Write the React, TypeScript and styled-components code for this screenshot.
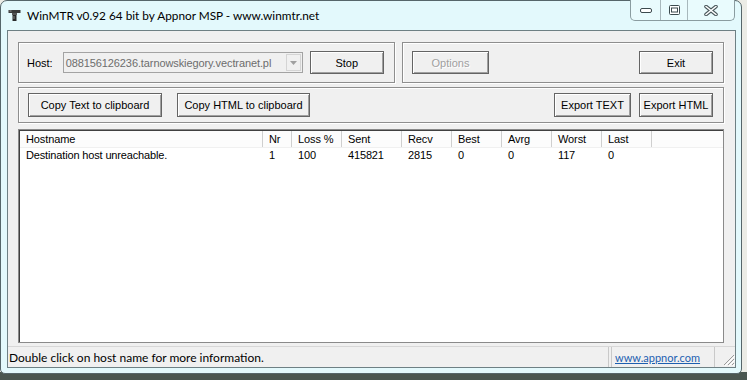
import styled, { createGlobalStyle } from "styled-components";

const GlobalStyle = createGlobalStyle`
  html, body {
    margin: 0;
    padding: 0;
  }
  body {
    width: 747px;
    height: 380px;
    overflow: hidden;
    background: linear-gradient(to bottom, #ecece6 0, #ecece6 372px, #4a5650 372px);
  }
`;

const uiFont = `"Liberation Sans", Arial, sans-serif`;
const aeroFont = `"Lato", "Open Sans", sans-serif`;

const Window = styled.div`
  box-sizing: border-box;
  width: 742px;
  height: 374px;
  border: 1px solid #56666a;
  border-radius: 7px 7px 5px 5px;
  background: #e3f9fc;
  padding: 0 5px 5px 6px;
  display: flex;
  flex-direction: column;
`;

const TitleBar = styled.div`
  height: 29px;
  display: flex;
  align-items: flex-start;
  position: relative;
`;

const TitleText = styled.div`
  margin-top: 7px;
  margin-left: 1px;
  font-family: ${aeroFont};
  font-size: 11.8px;
  color: #000;
  display: flex;
  align-items: center;
  gap: 6px;
  white-space: nowrap;
`;

const CaptionGroup = styled.div`
  position: absolute;
  top: -1px;
  right: 1px;
  height: 20px;
  display: flex;
  border: 1px solid #8a9ca0;
  border-top: none;
  border-radius: 0 0 5px 5px;
  overflow: hidden;
  background: #e9fbfd;
`;

const CaptionButton = styled.div<{ $w: number; $last?: boolean }>`
  width: ${(p) => p.$w}px;
  height: 20px;
  display: flex;
  align-items: center;
  justify-content: center;
  border-right: ${(p) => (p.$last ? "none" : "1px solid #a8b8bc")};
`;

const Client = styled.div`
  flex: 1;
  display: flex;
  flex-direction: column;
  border: 1px solid #6e8084;
  background: #f0f0f0;
  font-family: ${uiFont};
  font-size: 11px;
  color: #000;
`;

const Body = styled.div`
  padding: 11px 11px 0 10px;
  display: flex;
  flex-direction: column;
`;

const Row = styled.div<{ $top: number }>`
  display: flex;
  gap: 7px;
  margin-top: ${(p) => p.$top}px;
`;

const Group = styled.div<{ $w?: number; $h: number }>`
  box-sizing: border-box;
  ${(p) => (p.$w ? `width: ${p.$w}px;` : "flex: 1;")}
  height: ${(p) => p.$h}px;
  border: 1px solid #8e8e8e;
  box-shadow: inset 1px 1px 0 #fff, 1px 1px 0 #fff;
  display: flex;
  align-items: center;
  padding: 0 10px 0 8px;
`;

const Label = styled.span`
  margin-right: 10px;
`;

const Combo = styled.div`
  box-sizing: border-box;
  width: 245px;
  height: 21px;
  border: 1px solid #a3a3a3;
  background: #f0f0f0;
  display: flex;
  align-items: center;
  padding: 1px;
  margin-right: 7px;
`;

const ComboText = styled.div`
  flex: 1;
  color: #6d6d6d;
  padding-left: 1px;
  letter-spacing: -0.1px;
  white-space: nowrap;
  overflow: hidden;
`;

const ComboArrow = styled.div`
  width: 15px;
  height: 17px;
  box-sizing: border-box;
  border: 1px solid #d4d4d4;
  background: #f0f0f0;
  display: flex;
  align-items: center;
  justify-content: center;
`;

const Button = styled.div<{ $w: number; $h?: number; $disabled?: boolean; $ml?: number }>`
  box-sizing: border-box;
  width: ${(p) => p.$w}px;
  height: ${(p) => p.$h ?? 23}px;
  margin-left: ${(p) => p.$ml ?? 0}px;
  border: 1px solid #646464;
  box-shadow: inset 1px 1px 0 #fff, inset -1px -1px 0 #a0a0a0;
  background: #f0f0f0;
  display: flex;
  align-items: center;
  justify-content: center;
  color: ${(p) => (p.$disabled ? "#a0a0a0" : "#000")};
  text-shadow: ${(p) => (p.$disabled ? "1px 1px 0 #fff" : "none")};
  white-space: nowrap;
`;

const Spacer = styled.div`
  flex: 1;
`;

const List = styled.div`
  box-sizing: border-box;
  height: 214px;
  margin-top: 6px;
  border: 1px solid #8a8a8a;
  box-shadow: inset 1px 1px 0 #404040;
  background: #fff;
  padding: 1px 0 0 1px;
`;

const HeaderRow = styled.div`
  display: flex;
  height: 16px;
  background: #fcfcfc;
  border-bottom: 1px solid #f0f0f0;
`;

const HeaderCell = styled.div<{ $w: number }>`
  box-sizing: border-box;
  width: ${(p) => p.$w}px;
  padding-left: 6px;
  border-right: 1px solid #cfcfcf;
  line-height: 16px;
  white-space: nowrap;
  letter-spacing: -0.1px;
`;

const DataRow = styled.div`
  display: flex;
  height: 14px;
`;

const DataCell = styled.div<{ $w: number }>`
  box-sizing: border-box;
  width: ${(p) => p.$w}px;
  padding-left: 6px;
  line-height: 14px;
  white-space: nowrap;
  letter-spacing: -0.15px;
`;

const StatusBar = styled.div`
  margin-top: auto;
  height: 20px;
  border-top: 1px solid #d7d7d7;
  display: flex;
  align-items: stretch;
  font-family: ${aeroFont};
  font-size: 12px;
`;

const StatusMain = styled.div`
  flex: 1;
  padding-left: 1px;
  display: flex;
  align-items: center;
  border-right: 1px solid #c9c9c9;
`;

const StatusLink = styled.a`
  width: 104px;
  margin-left: 2px;
  box-sizing: border-box;
  border-left: 1px solid #c9c9c9;
  border-right: 1px solid #c9c9c9;
  padding-left: 3px;
  display: flex;
  align-items: center;
  font-size: 11px;
  color: #1c5fb0;
  text-decoration: underline;
`;

const Grip = styled.div`
  width: 20px;
  display: flex;
  align-items: flex-end;
  justify-content: flex-end;
  padding-bottom: 1px;
`;

const columns = [
  { name: "Hostname", w: 243, v: "Destination host unreachable." },
  { name: "Nr", w: 29, v: "1" },
  { name: "Loss %", w: 50, v: "100" },
  { name: "Sent", w: 60, v: "415821" },
  { name: "Recv", w: 50, v: "2815" },
  { name: "Best", w: 50, v: "0" },
  { name: "Avrg", w: 50, v: "0" },
  { name: "Worst", w: 50, v: "117" },
  { name: "Last", w: 50, v: "0" },
];

const AppIcon = () => (
  <svg width="13" height="13" viewBox="0 0 13 13">
    <rect x="0.5" y="1" width="12" height="3" fill="#3a3a3a" />
    <rect x="1.5" y="1.5" width="2" height="1" fill="#9a9a9a" />
    <rect x="4" y="4" width="5" height="2" fill="#555" />
    <rect x="4.5" y="6" width="4" height="6" fill="#2a2a2a" />
    <rect x="5.5" y="7" width="1" height="3" fill="#888" />
  </svg>
);

const App = () => {
  return (
    <>
      <GlobalStyle />
      <Window>
        <TitleBar>
          <TitleText>
            <AppIcon />
            WinMTR v0.92 64 bit by Appnor MSP - www.winmtr.net
          </TitleText>
          <CaptionGroup>
            <CaptionButton $w={29}>
              <svg width="12" height="6" viewBox="0 0 12 6">
                <rect x="0.5" y="1.5" width="11" height="4" rx="1.5" fill="#fff" stroke="#3c4a4e" />
              </svg>
            </CaptionButton>
            <CaptionButton $w={26}>
              <svg width="11" height="10" viewBox="0 0 11 10">
                <rect x="0.5" y="0.5" width="10" height="9" rx="1" fill="#fff" stroke="#3c4a4e" />
                <rect x="2.5" y="3" width="6" height="4" fill="#fff" stroke="#3c4a4e" />
              </svg>
            </CaptionButton>
            <CaptionButton $w={46} $last>
              <svg width="14" height="11" viewBox="0 0 14 11">
                <path d="M2 1.5 L12 9.5 M12 1.5 L2 9.5" stroke="#4a585c" strokeWidth="3.6" strokeLinecap="round" />
                <path d="M2 1.5 L12 9.5 M12 1.5 L2 9.5" stroke="#fff" strokeWidth="1.6" strokeLinecap="round" />
              </svg>
            </CaptionButton>
          </CaptionGroup>
        </TitleBar>
        <Client>
          <Body>
            <Row $top={0}>
              <Group $w={377} $h={41}>
                <Label>Host:</Label>
                <Combo>
                  <ComboText>088156126236.tarnowskiegory.vectranet.pl</ComboText>
                  <ComboArrow>
                    <svg width="7" height="4" viewBox="0 0 7 4">
                      <path d="M0 0 H7 L3.5 4 Z" fill="#a0a0a0" />
                    </svg>
                  </ComboArrow>
                </Combo>
                <Button $w={76}>Stop</Button>
              </Group>
              <Group $h={41}>
                <Button $w={77} $ml={1} $disabled>
                  Options
                </Button>
                <Spacer />
                <Button $w={74}>Exit</Button>
              </Group>
            </Row>
            <Row $top={4}>
              <Group $h={36}>
                <Button $w={134} $h={24} $ml={1}>
                  Copy Text to clipboard
                </Button>
                <Button $w={133} $h={24} $ml={15}>
                  Copy HTML to clipboard
                </Button>
                <Spacer />
                <Button $w={77} $h={24}>
                  Export TEXT
                </Button>
                <Button $w={74} $h={24} $ml={8}>
                  Export HTML
                </Button>
              </Group>
            </Row>
            <List>
              <HeaderRow>
                {columns.map((c) => (
                  <HeaderCell key={c.name} $w={c.w}>
                    {c.name}
                  </HeaderCell>
                ))}
              </HeaderRow>
              <DataRow>
                {columns.map((c) => (
                  <DataCell key={c.name} $w={c.w}>
                    {c.v}
                  </DataCell>
                ))}
              </DataRow>
            </List>
          </Body>
          <StatusBar>
            <StatusMain>Double click on host name for more information.</StatusMain>
            <StatusLink href="#">www.appnor.com</StatusLink>
            <Grip>
              <svg width="14" height="14" viewBox="0 0 14 14">
                <path d="M13 3 L3 13 M13 7 L7 13 M13 11 L11 13" stroke="#9a9a9a" strokeWidth="1" />
                <path d="M14 4 L4 14 M14 8 L8 14 M14 12 L12 14" stroke="#fff" strokeWidth="1" />
              </svg>
            </Grip>
          </StatusBar>
        </Client>
      </Window>
    </>
  );
};

export default App;
